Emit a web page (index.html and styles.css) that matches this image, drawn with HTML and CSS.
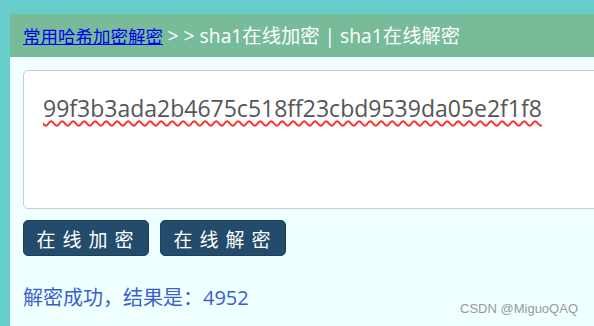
FILE: index.html
```html
<!DOCTYPE html>
<html>
<head>
<meta charset="utf-8">
<title>sha1在线加密 | sha1在线解密</title>
<link rel="stylesheet" href="styles.css">
</head>
<body>
<div class="wrap">
    <div class="crumb">
        <a href="###">常用哈希加密解密</a> <span class="here">&gt; &gt; sha1在线加密 | sha1在线解密</span>
    </div>
    <div class="main">
        <textarea class="input" spellcheck="true">99f3b3ada2b4675c518ff23cbd9539da05e2f1f8</textarea>
        <div class="btns">
            <button class="btn">在线加密</button>
            <button class="btn">在线解密</button>
        </div>
        <p class="result">解密成功，结果是：4952</p>
    </div>
</div>
<div class="mark">CSDN @MiguoQAQ</div>
</body>
</html>
```

FILE: styles.css
```css
html, body {
    margin: 0;
    padding: 0;
    height: 100%;
    overflow: hidden;
}
body {
    background: #66cccc;
    font-family: "Open Sans", "Noto Sans CJK SC", sans-serif;
}
.wrap {
    margin: 14px 0 0 10px;
    width: 640px;
    height: 100%;
    background: #f0ffff;
}
.crumb {
    height: 43px;
    line-height: 43px;
    padding-left: 13px;
    background: #77bb99;
    color: #fff;
    font-size: 17.5px;
}
.crumb a {
    color: #0000ee;
}
.crumb .here {
    font-size: 19.3px;
}
.main {
    padding: 13px 0 0 13px;
}
.input {
    display: block;
    box-sizing: border-box;
    width: 620px;
    height: 139px;
    margin: 0;
    padding: 24px 19px;
    border: 1px solid #ccc;
    border-radius: 5px;
    background: #fff;
    color: #555;
    font-family: "Open Sans", sans-serif;
    font-size: 23px;
    line-height: 1.2;
    resize: none;
    text-decoration: underline wavy #ff2a2a;
    text-decoration-thickness: 1.5px;
    text-underline-offset: 3px;
}
.btns {
    display: flex;
    gap: 11px;
    margin-top: 11px;
}
.btn {
    width: 126px;
    height: 36px;
    padding: 0 0 0 5px;
    border: 1px solid #1d3f5c;
    border-radius: 5px;
    background: #234b6b;
    color: #fff;
    font-family: "Noto Sans CJK SC", sans-serif;
    font-size: 19px;
    letter-spacing: 7px;
}
.result {
    margin: 26px 0 0;
    color: #3a5fcd;
    font-size: 20px;
}
.mark {
    position: absolute;
    right: 16px;
    bottom: 10px;
    color: #999;
    font-family: "Liberation Sans", sans-serif;
    font-size: 13px;
}
```
